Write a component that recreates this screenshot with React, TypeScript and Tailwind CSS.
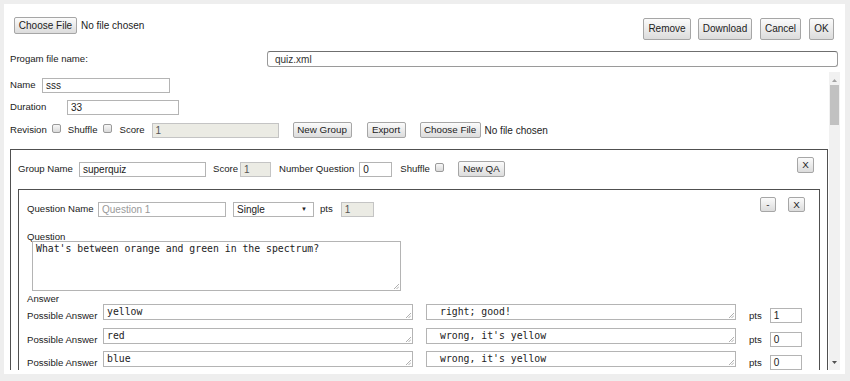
import React from 'react';

const btn =
  'inline-flex items-center justify-center border border-[#a6a6a6] rounded-[2px] bg-linear-to-b from-[#fbfbfb] to-[#dcdcdc] text-[#222] leading-none';
const field = 'border border-[#b4b4b4] bg-white h-[15px] pl-[3px] flex items-center text-[10px] text-[#222]';
const disabledField = 'border border-[#c4c4c4] bg-[#ebebe4] h-[15px] pl-[3px] flex items-center text-[10px] text-[#555]';

const Check = () => (
  <span className="inline-block w-[9px] h-[9px] border border-[#9a9a9a] rounded-[2px] bg-linear-to-b from-[#f7f7f7] to-[#dadada]" />
);

const Grip = () => (
  <svg className="absolute right-[1px] bottom-[1px]" width="6" height="6" viewBox="0 0 6 6">
    <path d="M1 6 L6 1 M3.5 6 L6 3.5" stroke="#9a9a9a" strokeWidth="0.8" />
  </svg>
);

const Area = ({ text, className }: { text: string; className: string }) => (
  <div
    className={`relative border border-[#b4b4b4] bg-white font-['DejaVu_Sans_Mono',monospace] text-[9.8px] text-[#222] pl-[3px] pt-[1px] leading-[12px] ${className}`}
  >
    {text}
    <Grip />
  </div>
);

const answers = [
  { a: 'yellow', r: 'right; good!', p: '1' },
  { a: 'red', r: "wrong, it's yellow", p: '0' },
  { a: 'blue', r: "wrong, it's yellow", p: '0' },
];

const App: React.FC = () => {
  return (
    <div className="w-[850px] h-[381px] bg-[#eeeeee] pt-[4px] pl-[4px] font-['Liberation_Sans',Arial,sans-serif] text-[9.6px] text-[#222] overflow-hidden">
      <div className="w-[841px] h-[370px] bg-white pt-[13px]">
        {/* top bar */}
        <div className="flex items-start justify-between pl-[10px] pr-[11px] h-[23px]">
          <div className="flex items-center gap-[4px]">
            <button className={`${btn} w-[63px] h-[17px] text-[10px]`}>Choose File</button>
            <span className="text-[10px]">No file chosen</span>
          </div>
          <div className="flex items-center gap-[7px] mt-[1px]">
            <button className={`${btn} w-[48px] h-[22px] text-[10px]`}>Remove</button>
            <button className={`${btn} w-[54px] h-[22px] text-[10px]`}>Download</button>
            <button className={`${btn} w-[41px] h-[22px] text-[10px] ml-[1px]`}>Cancel</button>
            <button className={`${btn} w-[25px] h-[22px] text-[10px] ml-[1px]`}>OK</button>
          </div>
        </div>

        <div className="flex items-center mt-[11px] pl-[6px] pr-[7px]">
          <span className="w-[257px]">Progam file name:</span>
          <div className="flex-1 h-[16px] border border-[#9a9a9a] border-t-[#6f6f6f] rounded-[3px] pl-[7px] flex items-center text-[10px] text-[#333]">
            quiz.xml
          </div>
        </div>

        {/* scrolling area */}
        <div className="flex ml-[6px] mt-[5px] h-[298px] w-[830px]">
          <div className="w-[819px] overflow-hidden">
            <div className="flex items-center mt-[6px]">
              <span className="w-[32px]">Name</span>
              <div className={`${field} w-[128px]`}>sss</div>
            </div>
            <div className="flex items-center mt-[7px]">
              <span className="w-[57px]">Duration</span>
              <div className={`${field} w-[112px]`}>33</div>
            </div>
            <div className="flex items-center mt-[7px] h-[16px]">
              <span>Revision</span>
              <span className="ml-[5px]"><Check /></span>
              <span className="ml-[7px]">Shuffle</span>
              <span className="ml-[5px]"><Check /></span>
              <span className="ml-[8px]">Score</span>
              <div className={`${disabledField} w-[127px] ml-[7px]`}>1</div>
              <button className={`${btn} w-[59px] h-[16px] text-[9.8px] ml-[14px]`}>New Group</button>
              <button className={`${btn} w-[39px] h-[16px] text-[9.8px] ml-[15px]`}>Export</button>
              <button className={`${btn} w-[61px] h-[16px] text-[9.8px] ml-[14px]`}>Choose File</button>
              <span className="ml-[4px] text-[10px]">No file chosen</span>
            </div>

            {/* group box */}
            <div className="mt-[11px] w-[818px] border border-[#505050] pl-[7px] pr-[7px] pt-[7px] pb-[10px]">
              <div className="flex items-start justify-between">
                <div className="flex items-center mt-[4px] h-[16px]">
                  <span className="w-[61px]">Group Name</span>
                  <div className={`${field} w-[127px]`}>superquiz</div>
                  <span className="ml-[7px]">Score</span>
                  <div className={`${disabledField} w-[31px] ml-[2px]`}>1</div>
                  <span className="ml-[8px]">Number Question</span>
                  <div className={`${field} w-[33px] ml-[5px]`}>0</div>
                  <span className="ml-[8px]">Shuffle</span>
                  <span className="ml-[5px]"><Check /></span>
                  <button className={`${btn} w-[47px] h-[16px] text-[9.8px] ml-[14px]`}>New QA</button>
                </div>
                <button className={`${btn} w-[17px] h-[16px] text-[9.8px] mr-[6px]`}>X</button>
              </div>

              {/* question box */}
              <div className="mt-[12px] border border-[#505050] pl-[8px] pr-[14px] pt-[7px] h-[200px]">
                <div className="flex items-start justify-between">
                  <div className="flex items-center mt-[4px] h-[16px]">
                    <span className="w-[71px]">Question Name</span>
                    <div className={`${field} w-[128px] text-[#999]`}>Question 1</div>
                    <div className="ml-[7px] w-[81px] h-[15px] border border-[#b4b4b4] bg-white flex items-center justify-between pl-[3px] pr-[6px] text-[10px]">
                      <span>Single</span>
                      <span className="text-[6px]">▼</span>
                    </div>
                    <span className="ml-[6px]">pts</span>
                    <div className={`${disabledField} w-[33px] ml-[8px]`}>1</div>
                  </div>
                  <div className="flex items-center gap-[12px]">
                    <button className={`${btn} w-[16px] h-[15px] text-[9.8px]`}>-</button>
                    <button className={`${btn} w-[17px] h-[15px] text-[9.8px]`}>X</button>
                  </div>
                </div>

                <div className="mt-[14px] leading-[11px]">Question</div>
                <Area
                  className="ml-[5px] w-[369px] h-[50px] mt-[-1px]"
                  text="What's between orange and green in the spectrum?"
                />
                <div className="mt-[2px] leading-[11px]">Answer</div>
                {answers.map((row, i) => (
                  <div key={i} className="flex items-start h-[23.5px]">
                    <span className="w-[76px] mt-[6px] leading-[11px]">Possible Answer</span>
                    <Area className="w-[310px] h-[16px]" text={row.a} />
                    <Area className="w-[310px] h-[16px] ml-[13px] pl-[13px]" text={row.r} />
                    <span className="ml-[13px] mt-[6px] leading-[11px]">pts</span>
                    <div className={`${field} w-[32px] ml-[8px] mt-[4px]`}>{row.p}</div>
                  </div>
                ))}
              </div>
            </div>
          </div>

          {/* scrollbar */}
          <div className="w-[11px] h-full bg-[#f1f1f1] flex flex-col items-center">
            <span className="mt-[5px] h-[6px] w-[7px] flex items-center justify-center">
              <svg width="5" height="3" viewBox="0 0 5 3"><path d="M0 3 L2.5 0 L5 3 Z" fill="#a3a3a3" /></svg>
            </span>
            <div className="mt-[2px] w-[9px] h-[40px] bg-[#c1c1c1]" />
            <div className="flex-1" />
            <span className="mb-[5px] h-[6px] w-[7px] flex items-center justify-center">
              <svg width="5" height="3" viewBox="0 0 5 3"><path d="M0 0 L5 0 L2.5 3 Z" fill="#505050" /></svg>
            </span>
          </div>
        </div>
      </div>
    </div>
  );
};

export default App;
